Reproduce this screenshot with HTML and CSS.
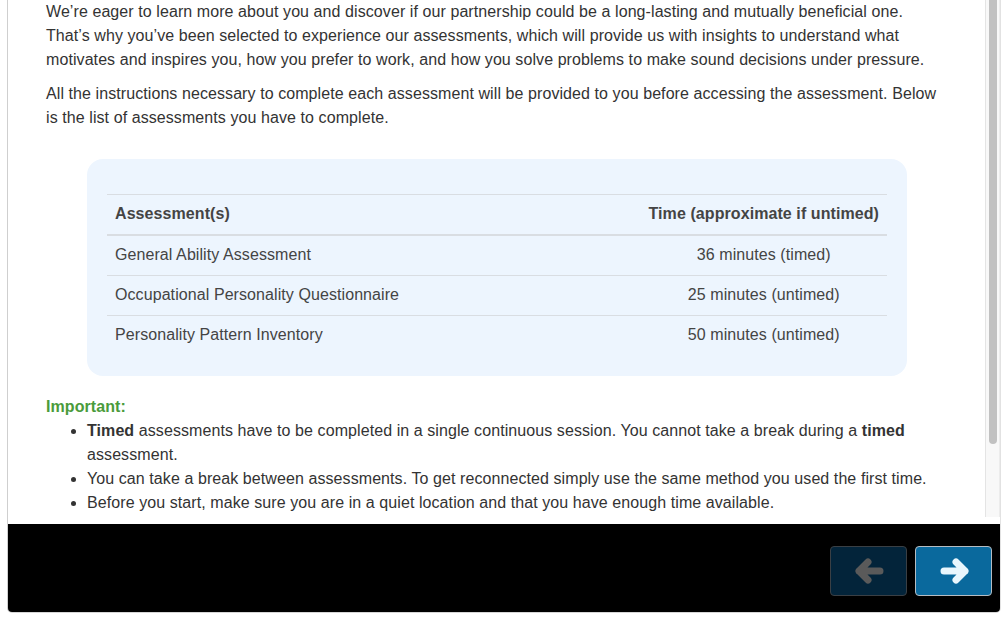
FILE: index.html
```html
<!DOCTYPE html>
<html lang="en">
<head>
    <meta charset="UTF-8">
    <meta name="viewport" content="width=device-width, initial-scale=1.0">
    <title>Assessments</title>
    <link rel="stylesheet" href="styles.css">
</head>
<body>
    <div class="frame">
        <div class="main">
            <div class="content">
                <p>We’re eager to learn more about you and discover if our partnership could be a long-lasting and mutually beneficial one. That’s why you’ve been selected to experience our assessments, which will provide us with insights to understand what motivates and inspires you, how you prefer to work, and how you solve problems to make sound decisions under pressure.</p>
                <p>All the instructions necessary to complete each assessment will be provided to you before accessing the assessment. Below is the list of assessments you have to complete.</p>

                <div class="table-box">
                    <table class="assess-table">
                        <thead>
                            <tr>
                                <th>Assessment(s)</th>
                                <th class="time-col">Time (approximate if untimed)</th>
                            </tr>
                        </thead>
                        <tbody>
                            <tr>
                                <td>General Ability Assessment</td>
                                <td class="time-col">36 minutes (timed)</td>
                            </tr>
                            <tr>
                                <td>Occupational Personality Questionnaire</td>
                                <td class="time-col">25 minutes (untimed)</td>
                            </tr>
                            <tr>
                                <td>Personality Pattern Inventory</td>
                                <td class="time-col">50 minutes (untimed)</td>
                            </tr>
                        </tbody>
                    </table>
                </div>

                <div class="important">Important:</div>
                <ul class="notes">
                    <li><b>Timed</b> assessments have to be completed in a single continuous session. You cannot take a break during a <b>timed</b> assessment.</li>
                    <li>You can take a break between assessments. To get reconnected simply use the same method you used the first time.</li>
                    <li>Before you start, make sure you are in a quiet location and that you have enough time available.</li>
                </ul>
            </div>
            <div class="scrollbar">
                <div class="thumb"></div>
            </div>
        </div>

        <div class="footer">
            <button class="nav-btn prev" type="button" disabled>
                <svg width="30" height="28" viewBox="0 0 30 28">
                    <path d="M26 14 H5 M14 5 L5 14 L14 23" fill="none" stroke="#5a5a5a" stroke-width="7" stroke-linecap="round" stroke-linejoin="round"/>
                </svg>
            </button>
            <button class="nav-btn next" type="button">
                <svg width="30" height="28" viewBox="0 0 30 28">
                    <path d="M5 14 H26 M17 5 L26 14 L17 23" fill="none" stroke="#e9f6fd" stroke-width="7" stroke-linecap="round" stroke-linejoin="round"/>
                </svg>
            </button>
        </div>
    </div>
</body>
</html>
```

FILE: styles.css
```css
body {
    margin: 0;
    background: #fff;
    font-family: "Liberation Sans", Arial, Helvetica, sans-serif;
    font-size: 16px;
    letter-spacing: 0.08px;
    line-height: 24px;
    color: #333;
}

.frame {
    margin-left: 7px;
    width: 992px;
    height: 612px;
    border-left: 1px solid #cfcfcf;
    border-right: 1px solid #e2e2e2;
    border-bottom: 1px solid #d6d6d6;
    border-radius: 0 0 5px 5px;
    display: flex;
    flex-direction: column;
    overflow: hidden;
}

.main {
    display: flex;
    height: 524px;
    overflow: hidden;
}

.content {
    flex: 1;
    padding: 0 38px;
}

.content p {
    margin: 0 0 10px;
}

.table-box {
    margin: 29px 40px 19px 41px;
    padding: 35px 20px 22px;
    background: #edf5fe;
    border-radius: 16px;
}

.assess-table {
    width: 100%;
    border-collapse: collapse;
    color: #444;
}

.assess-table th,
.assess-table td {
    padding: 8px;
    text-align: left;
    line-height: 22.86px;
    border-top: 1px solid #d9dde2;
}

.assess-table th {
    border-bottom: 2px solid #d9dde2;
    font-weight: bold;
}

.assess-table tbody tr:first-child td {
    border-top: 0;
}

.assess-table .time-col {
    text-align: center;
    white-space: nowrap;
    width: 1px;
}

.important {
    color: #4a9b3b;
    font-weight: bold;
}

.notes {
    margin: 0;
    padding-left: 41px;
}

.notes b {
    color: #333;
}

.scrollbar {
    width: 13px;
    height: 517px;
    background: #f8f8f8;
    border-left: 1px solid #e4e4e4;
    border-right: 1px solid #ececec;
}

.thumb {
    margin-left: 3px;
    width: 8px;
    height: 444px;
    background: #c1c1c1;
    border-radius: 0 0 4px 4px;
}

.footer {
    flex: 1;
    background: #000;
    display: flex;
    justify-content: flex-end;
    align-items: flex-start;
    gap: 8px;
    padding: 22px 8px 0 0;
}

.nav-btn {
    width: 77px;
    height: 50px;
    border-radius: 4px;
    display: flex;
    align-items: center;
    justify-content: center;
    padding: 0;
    cursor: pointer;
}

.nav-btn.prev {
    background: #03243a;
    border: 1px solid #3a3f44;
    cursor: default;
}

.nav-btn.next {
    background: #0a699d;
    border: 1px solid #b5bcc2;
}
```
